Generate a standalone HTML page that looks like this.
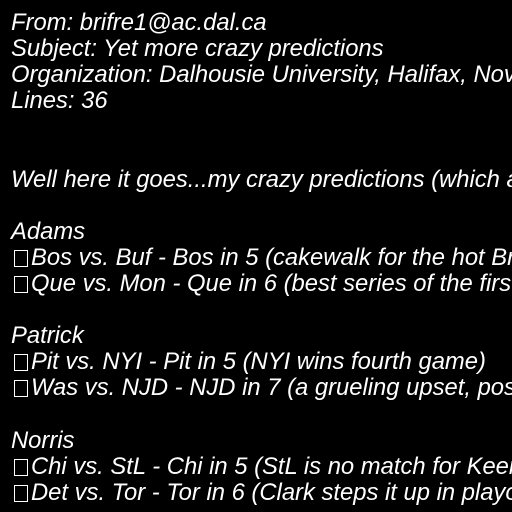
<!DOCTYPE html>
<html><head><style>
html,body{margin:0;padding:0;background:#000;width:512px;height:512px;overflow:hidden}
pre{margin:0;padding:10px 0 0 11px;width:501px;height:502px;overflow:hidden;color:#fff;font:italic 23.8px/26.1px "Liberation Sans",sans-serif;white-space:pre}
.b{display:inline-block;width:14px;height:17px;border:1px solid #fff;box-sizing:border-box;margin:0 3px 0 3px;vertical-align:-2px}
</style></head><body><pre>From: brifre1@ac.dal.ca
Subject: Yet more crazy predictions
Organization: Dalhousie University, Halifax, Nova Scotia, Canada
Lines: 36


Well here it goes...my crazy predictions (which are sure to be wrong)

Adams
<span class="b"></span>Bos vs. Buf - Bos in 5 (cakewalk for the hot Bruins)
<span class="b"></span>Que vs. Mon - Que in 6 (best series of the first round)

Patrick
<span class="b"></span>Pit vs. NYI - Pit in 5 (NYI wins fourth game)
<span class="b"></span>Was vs. NJD - NJD in 7 (a grueling upset, possibly)

Norris
<span class="b"></span>Chi vs. StL - Chi in 5 (StL is no match for Keenan)
<span class="b"></span>Det vs. Tor - Tor in 6 (Clark steps it up in playoffs)
</pre></body></html>
